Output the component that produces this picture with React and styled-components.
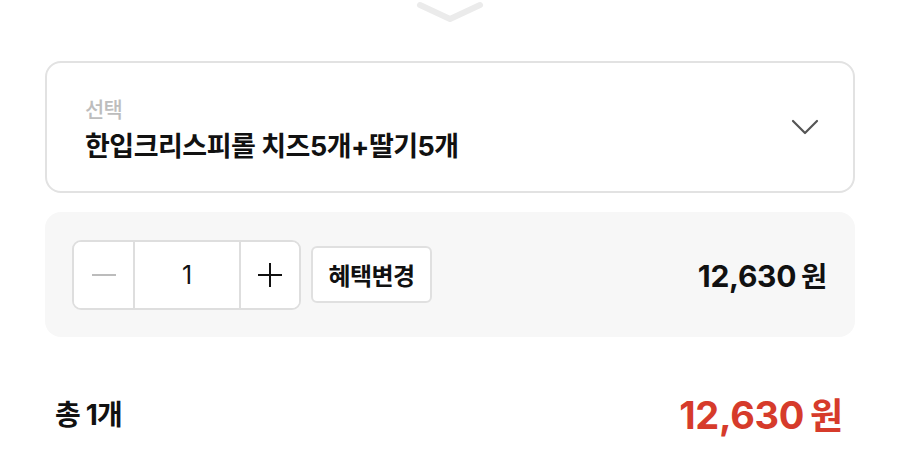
import React, { useState } from "react";
import styled, { createGlobalStyle } from "styled-components";

const GlobalStyle = createGlobalStyle`
  html, body {
    margin: 0;
    padding: 0;
    background: #ffffff;
  }
  body {
    font-family: "Inter", "Noto Sans CJK KR", sans-serif;
    color: #111111;
    -webkit-font-smoothing: antialiased;
  }
  * {
    box-sizing: border-box;
  }
`;

const Sheet = styled.div`
  width: 900px;
  height: 452px;
  overflow: hidden;
  display: flex;
  flex-direction: column;
  padding: 0 45px;
`;

const HandleRow = styled.div`
  display: flex;
  justify-content: center;
  height: 61px;
`;

const Handle = styled.svg`
  display: block;
`;

const SelectBox = styled.div`
  height: 132px;
  border: 2px solid #e2e2e2;
  border-radius: 16px;
  display: flex;
  align-items: center;
  justify-content: space-between;
  padding: 0 34px 0 38px;
  cursor: pointer;
`;

const SelectText = styled.div`
  display: flex;
  flex-direction: column;
  gap: 2px;
  margin-top: 2px;
`;

const Label = styled.span`
  font-size: 21px;
  font-weight: 500;
  color: #bdbdbd;
  letter-spacing: -0.8px;
`;

const ProductName = styled.span`
  font-size: 27px;
  font-weight: 700;
  color: #111111;
  letter-spacing: -0.5px;
`;

const OptionCard = styled.div`
  margin-top: 19px;
  height: 125px;
  background: #f7f7f7;
  border-radius: 16px;
  display: flex;
  align-items: center;
  padding: 0 28px 0 27px;
`;

const Stepper = styled.div`
  display: flex;
  height: 70px;
  border: 2px solid #dedede;
  border-radius: 9px;
  background: #ffffff;
  overflow: hidden;
`;

const StepButton = styled.button`
  width: ${(p) => p.$w}px;
  border: none;
  background: #ffffff;
  display: flex;
  align-items: center;
  justify-content: center;
  padding: 0;
  cursor: pointer;
  border-left: ${(p) => (p.$divider ? "2px solid #dedede" : "none")};
`;

const Count = styled.div`
  width: 106px;
  border-left: 2px solid #dedede;
  display: flex;
  align-items: center;
  justify-content: center;
  font-size: 25px;
  font-weight: 400;
  color: #111111;
`;

const BenefitButton = styled.button`
  margin-left: 10px;
  height: 57px;
  width: 121px;
  border: 2px solid #e0e0e0;
  border-radius: 6px;
  background: #ffffff;
  font-family: "Noto Sans CJK KR", sans-serif;
  font-size: 24px;
  font-weight: 700;
  letter-spacing: -0.6px;
  color: #111111;
  padding: 0;
  cursor: pointer;
`;

const Price = styled.div`
  margin-left: auto;
  font-size: ${(p) => p.$size}px;
  font-weight: 700;
  color: ${(p) => p.$color};
  letter-spacing: -0.3px;
  display: flex;
  align-items: baseline;
`;

const Won = styled.span`
  margin-left: ${(p) => p.$gap}px;
  font-family: "Noto Sans CJK KR", sans-serif;
  font-size: 0.95em;
`;

const TotalRow = styled.div`
  margin-top: 50px;
  display: flex;
  align-items: center;
  padding: 0 12px 0 10px;
`;

const TotalLabel = styled.span`
  font-size: 28px;
  font-weight: 700;
  letter-spacing: -0.8px;
`;

const formatWon = (n) => n.toLocaleString("ko-KR");

const App = () => {
  const [qty, setQty] = useState(1);
  const unit = 12630;

  return (
    <>
      <GlobalStyle />
      <Sheet>
        <HandleRow>
          <Handle width="70" height="24" viewBox="0 0 70 24">
            <path
              d="M5 5 L35 19 L65 5"
              fill="none"
              stroke="#ebebeb"
              strokeWidth="6"
              strokeLinecap="round"
              strokeLinejoin="round"
            />
          </Handle>
        </HandleRow>

        <SelectBox>
          <SelectText>
            <Label>선택</Label>
            <ProductName>한입크리스피롤 치즈5개+딸기5개</ProductName>
          </SelectText>
          <svg width="28" height="16" viewBox="0 0 28 16">
            <path
              d="M2 2 L14 14 L26 2"
              fill="none"
              stroke="#555555"
              strokeWidth="2.2"
              strokeLinecap="round"
              strokeLinejoin="round"
            />
          </svg>
        </SelectBox>

        <OptionCard>
          <Stepper>
            <StepButton $w={59} onClick={() => setQty((q) => Math.max(1, q - 1))}>
              <svg width="26" height="26" viewBox="0 0 26 26">
                <path d="M1 13 H25" stroke="#bcbcbc" strokeWidth="2" />
              </svg>
            </StepButton>
            <Count>{qty}</Count>
            <StepButton $w={60} $divider onClick={() => setQty((q) => q + 1)}>
              <svg width="26" height="26" viewBox="0 0 26 26">
                <path d="M1 13 H25 M13 1 V25" stroke="#111111" strokeWidth="2" />
              </svg>
            </StepButton>
          </Stepper>
          <BenefitButton>혜택변경</BenefitButton>
          <Price $size={30} $color="#111111">
            {formatWon(unit * qty)}
            <Won $gap={5}>원</Won>
          </Price>
        </OptionCard>

        <TotalRow>
          <TotalLabel>총 {qty}개</TotalLabel>
          <Price $size={38} $color="#d63b2b">
            {formatWon(unit * qty)}
            <Won $gap={6}>원</Won>
          </Price>
        </TotalRow>
      </Sheet>
    </>
  );
};

export default App;
